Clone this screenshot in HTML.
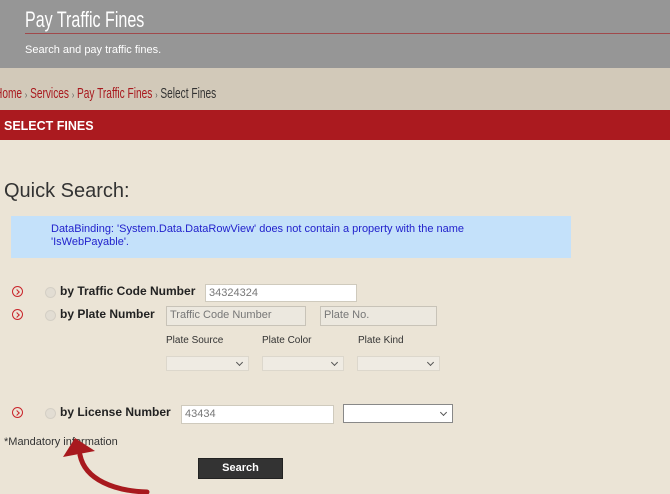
<!DOCTYPE html>
<html><head><meta charset="utf-8"><style>
*{margin:0;padding:0;box-sizing:border-box}
body{width:670px;height:494px;overflow:hidden;background:#ebe4d6;font-family:"Liberation Sans",Arial,sans-serif;position:relative}
.a{position:absolute}
.hdr{left:0;top:0;width:670px;height:68px;background:#969696}
.band{left:0;top:68px;width:670px;height:42px;background:#d2c9b9}
.red{left:0;top:110px;width:670px;height:30px;background:#ab1a1f}
.lbl{font-weight:bold;font-size:12px;color:#222}
.ic{width:11px;height:11px;border:1.5px solid #c9252b;border-radius:50%}
.ic:after{content:"";position:absolute;left:2px;top:2.5px;width:3px;height:3px;border-right:1.3px solid #c9252b;border-top:1.3px solid #c9252b;transform:rotate(45deg)}
.rd{width:11px;height:11px;border-radius:50%;background:#e2ddd3;border:1px solid #d4cfc5}
.inp{background:#fff;border:1px solid #cfcabd;font-size:11px;color:#777;padding:2px 3px}
.dis{background:#ece8df;border:1px solid #c8c3b8}
.sel{background:#efebe3;border:1px solid #dcd7cc}
.sel:after{content:"";position:absolute;right:6px;top:50%;margin-top:-4px;width:4px;height:4px;border-right:1.3px solid #555;border-bottom:1.3px solid #555;transform:rotate(45deg)}
.sm{font-size:10px;color:#333}
.nar{transform:scaleX(0.73);transform-origin:0 0;white-space:nowrap}
</style></head><body>
<div class="a hdr"></div>
<div class="a nar" style="left:25px;top:7px;font-size:22px;color:#fff">Pay Traffic Fines</div>
<div class="a" style="left:25px;top:33px;width:645px;height:1px;background:#a0494b"></div>
<div class="a" style="left:25px;top:44px;font-size:11px;color:#fff">Search and pay traffic fines.</div>
<div class="a band"></div>
<div class="a nar" style="left:-5px;top:86px;font-size:14.5px;color:#a8191e;transform:scaleX(0.7)">Home <span style="color:#555;font-size:10px">›</span> Services <span style="color:#555;font-size:10px">›</span> Pay Traffic Fines <span style="color:#555;font-size:10px">›</span> <span style="color:#333">Select Fines</span></div>
<div class="a red"></div>
<div class="a" style="left:4px;top:119px;font-size:12.5px;font-weight:bold;color:#fff">SELECT FINES</div>
<div class="a" style="left:4px;top:180px;font-size:20px;color:#333">Quick Search:</div>
<div class="a" style="left:11px;top:216px;width:560px;height:42px;background:#c4e1fa"></div>
<div class="a" style="left:51px;top:223px;font-size:11px;line-height:13px;color:#2222cc">DataBinding: 'System.Data.DataRowView' does not contain a property with the name<br>'IsWebPayable'.</div>

<div class="a ic" style="left:12px;top:286px"></div>
<div class="a rd" style="left:45px;top:287px"></div>
<div class="a lbl" style="left:60px;top:284px">by Traffic Code Number</div>
<div class="a inp" style="left:205px;top:284px;width:152px;height:18px">34324324</div>

<div class="a ic" style="left:12px;top:309px"></div>
<div class="a rd" style="left:45px;top:310px"></div>
<div class="a lbl" style="left:60px;top:307px">by Plate Number</div>
<div class="a inp dis" style="left:166px;top:306px;width:140px;height:20px">Traffic Code Number</div>
<div class="a inp dis" style="left:320px;top:306px;width:117px;height:20px">Plate No.</div>
<div class="a sm" style="left:166px;top:335px">Plate Source</div>
<div class="a sm" style="left:262px;top:335px">Plate Color</div>
<div class="a sm" style="left:358px;top:335px">Plate Kind</div>
<div class="a sel" style="left:166px;top:356px;width:83px;height:15px"></div>
<div class="a sel" style="left:262px;top:356px;width:82px;height:15px"></div>
<div class="a sel" style="left:357px;top:356px;width:83px;height:15px"></div>

<div class="a ic" style="left:12px;top:407px"></div>
<div class="a rd" style="left:45px;top:408px"></div>
<div class="a lbl" style="left:60px;top:405px">by License Number</div>
<div class="a inp" style="left:181px;top:405px;width:153px;height:19px">43434</div>
<div class="a sel" style="left:343px;top:404px;width:110px;height:19px;background:#fff;border-color:#888"></div>
<div class="a" style="left:4px;top:436px;font-size:11px;color:#333">*Mandatory information</div>
<div class="a" style="left:198px;top:458px;width:85px;height:21px;background:#333;border:1px solid #222;color:#fff;font-weight:bold;font-size:11px;text-align:center;line-height:19px">Search</div>
<svg class="a" style="left:55px;top:435px" width="100" height="59" viewBox="0 0 100 59">
<path d="M92 57 C60 56 30 45 25 20" fill="none" stroke="#a8191e" stroke-width="5" stroke-linecap="round"/>
<polygon points="8,22 20,3 40,16" fill="#a8191e"/>
</svg>
</body></html>
